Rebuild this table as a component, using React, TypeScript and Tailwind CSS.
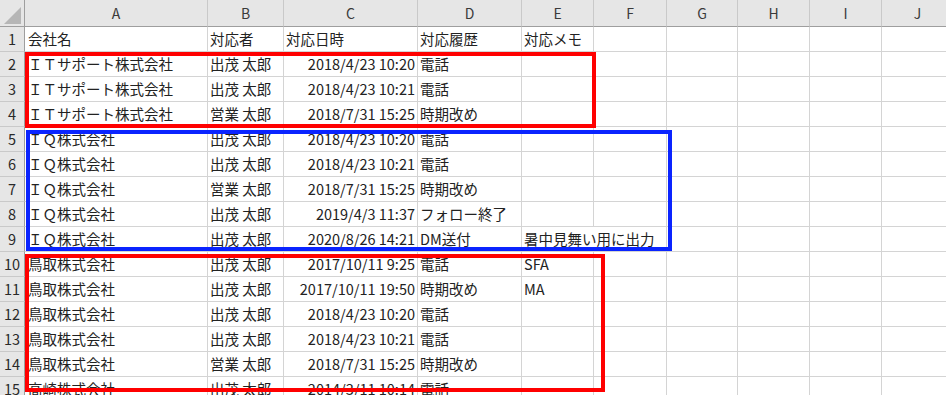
import React from "react";

const FONT = { fontFamily: '"Noto Sans CJK JP", "Noto Sans", sans-serif' };

const letters = ["A", "B", "C", "D", "E", "F", "G", "H", "I", "J"];

const IT = "ＩＴサポート株式会社";
const IQ = "ＩＱ株式会社";
const TT = "鳥取株式会社";
const D = "出茂 太郎";
const E = "営業 太郎";

const rows: string[][] = [
  ["会社名", "対応者", "対応日時", "対応履歴", "対応メモ"],
  [IT, D, "2018/4/23 10:20", "電話", ""],
  [IT, D, "2018/4/23 10:21", "電話", ""],
  [IT, E, "2018/7/31 15:25", "時期改め", ""],
  [IQ, D, "2018/4/23 10:20", "電話", ""],
  [IQ, D, "2018/4/23 10:21", "電話", ""],
  [IQ, E, "2018/7/31 15:25", "時期改め", ""],
  [IQ, D, "2019/4/3 11:37", "フォロー終了", ""],
  [IQ, D, "2020/8/26 14:21", "DM送付", "暑中見舞い用に出力"],
  [TT, D, "2017/10/11 9:25", "電話", "SFA"],
  [TT, D, "2017/10/11 19:50", "時期改め", "MA"],
  [TT, D, "2018/4/23 10:20", "電話", ""],
  [TT, D, "2018/4/23 10:21", "電話", ""],
  [TT, E, "2018/7/31 15:25", "時期改め", ""],
  ["高崎株式会社", D, "2014/3/11 10:14", "電話", ""],
];

const cellBase =
  "border-r border-b border-[#d4d4d4] bg-white flex items-center whitespace-nowrap text-[14.5px] leading-none text-[#222] overflow-hidden";

export default function App() {
  return (
    <div className="w-[946px] h-[395px] overflow-hidden bg-white relative" style={FONT}>
      <div className="grid grid-cols-[25px_183px_76px_134px_104px_72px_73px_71px_72px_72px_72px] grid-rows-[27px_repeat(15,25px)] w-[954px]">
        {/* corner */}
        <div className="bg-[#e6e6e6] border-r border-b border-[#9e9e9e] relative">
          <svg width="25" height="27" className="absolute left-0 top-0">
            <polygon points="21,7 21,24 4,24" fill="#b6b6b6" />
          </svg>
        </div>
        {letters.map((l) => (
          <div
            key={l}
            className="bg-[#e6e6e6] border-r border-b border-r-[#c9c9c9] border-b-[#9e9e9e] flex items-center justify-center text-[14px] text-[#3a3a3a] leading-none"
          >
            {l}
          </div>
        ))}
        {rows.map((r, i) => {
          const overflowE = i === 8;
          const isHeader = i === 0;
          return (
            <React.Fragment key={i}>
              <div className="bg-[#e6e6e6] border-r border-b border-r-[#9e9e9e] border-b-[#c9c9c9] flex items-center justify-center text-[14.5px] text-[#2a2a2a] leading-none">
                {i + 1}
              </div>
              <div className={cellBase + " pl-[3px]"}>{r[0]}</div>
              <div className={cellBase + " pl-[2px]"}>{r[1]}</div>
              <div className={cellBase + (isHeader ? " pl-[2px]" : " justify-end pr-[2px]")}>{r[2]}</div>
              <div className={cellBase + " pl-[2px]"}>{r[3]}</div>
              {overflowE ? (
                <div className={cellBase + " col-span-2 pl-[2px]"}>{r[4]}</div>
              ) : (
                <>
                  <div className={cellBase + " pl-[2px]"}>{r[4]}</div>
                  <div className={cellBase}></div>
                </>
              )}
              <div className={cellBase}></div>
              <div className={cellBase}></div>
              <div className={cellBase}></div>
              <div className={cellBase}></div>
            </React.Fragment>
          );
        })}
      </div>
      {/* highlight boxes */}
      <div className="absolute left-[25px] top-[52px] w-[571px] h-[76px] border-4 border-[#ff0000] pointer-events-none" />
      <div className="absolute left-[26px] top-[130px] w-[646px] h-[121px] border-4 border-[#0a24ff] pointer-events-none" />
      <div className="absolute left-[25px] top-[254px] w-[580px] h-[138px] border-4 border-[#ff0000] pointer-events-none" />
    </div>
  );
}
